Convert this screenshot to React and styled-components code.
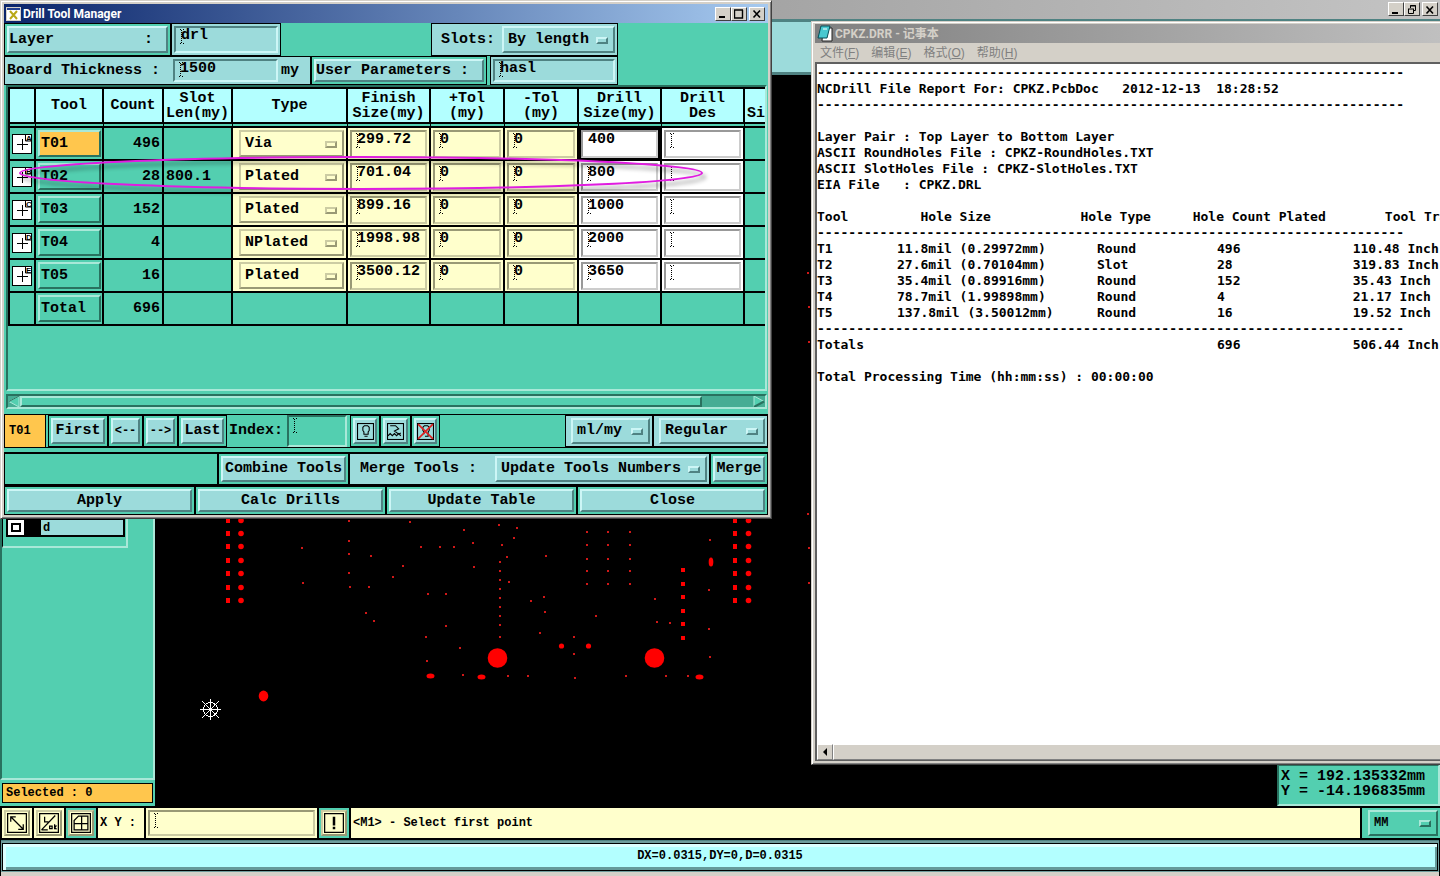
import React from 'react';
import styled, { createGlobalStyle, css } from 'styled-components';

const GlobalStyle = createGlobalStyle`
  *, *::before, *::after {
    box-sizing: border-box;
  }
  body {
    margin: 0;
    background: #000;
  }
  button, input, select, textarea {
    margin: 0;
    border-radius: 0;
    font: inherit;
    color: inherit;
    outline: none;
  }
`

const tones = {
  teal: { bg: '#53cfb0', light: '#a9e8d8', dark: '#29715f' },
  cyan: { bg: '#9cdbdb', light: '#cdf6f6', dark: '#4f8282' },
  cream: { bg: '#ffffcc', light: '#cccca3', dark: '#999975' },
  white: { bg: '#ffffff', light: '#cccccc', dark: '#999999' },
  orange: { bg: '#ffc64d', light: '#a9e8d8', dark: '#29715f' },
}

const raised = css`
  border: 2px solid;
  border-color: ${p => {
    const t = tones[p.$tone || 'cyan']
    return `${t.light} ${t.dark} ${t.dark} ${t.light}`
  }};
  background-color: ${p => tones[p.$tone || 'cyan'].bg};
`

const sunken = css`
  border: 2px solid;
  border-color: ${p => {
    const t = tones[p.$tone || 'cyan']
    return `${t.dark} ${t.light} ${t.light} ${t.dark}`
  }};
  background-color: ${p => tones[p.$tone || 'cyan'].bg};
`

const Desktop = styled.div`
  position: relative;
  display: flex;
  flex-direction: column;
  min-height: 100vh;
  overflow: hidden;
  background: #000;
  color: #000;
  font: bold 15px/16px "Liberation Mono", "Courier New", monospace;
`

/* editor behind the two windows */

const EditorTitle = styled.div`
  display: flex;
  justify-content: flex-end;
  height: 19px;
  padding: 2px 2px 0 0;
  background: linear-gradient(90deg, #808080, #c4c4c4);
`

const WinButtons = styled.div`
  display: flex;
  margin-left: auto;
  > :last-child {
    margin-left: 2px;
  }
`

const WinButton = styled.button`
  width: 16px;
  height: 14px;
  padding: 0;
  border: 1px solid;
  border-color: #fff #404040 #404040 #fff;
  background: #d4d0c8;
  svg {
    display: block;
    margin: 1px auto 0;
  }
`

const EditorStrip = styled.div`
  height: 56px;
  border-top: 3px solid #4f8282;
  border-bottom: 3px solid #4f8282;
  background: #9cdbdb;
`

const EditorBody = styled.div`
  display: flex;
  flex: 1;
`

const Side = styled.aside`
  display: flex;
  flex-direction: column;
  width: 155px;
  background: #53cfb0;
`

const LayerPanel = styled.div`
  flex: 1;
  border-left: 2px solid #29715f;
  border-right: 2px solid #a9e8d8;
  border-bottom: 2px solid #a9e8d8;
`

const LayerList = styled.div`
  display: flex;
  flex-direction: column;
  justify-content: flex-end;
  width: 126px;
  height: 473px;
  padding: 0 1px 9px 3px;
  border: 1px solid #000;
  border-right: 2px solid #a9e8d8;
  border-bottom: 2px solid #a9e8d8;
`

const LayerRow = styled.label`
  display: flex;
  height: 19px;
  border: 2px solid #000;
  background: #9cdbdb;
  font-size: 12px;
  input {
    width: 16px;
    height: 15px;
    appearance: none;
    border: 3px solid #fff;
    outline: 2px solid #000;
    outline-offset: -5px;
    background: #fff;
  }
  span {
    flex: 1;
    padding-left: 2px;
    border-left: 17px solid #000;
  }
`

const Selected = styled.div`
  height: 20px;
  margin: 3px 2px;
  padding: 1px 3px;
  border: 1px solid #000;
  background: #ffc64d;
  font-size: 12px;
`

const Canvas = styled.main`
  position: relative;
  display: flex;
  flex: 1;
  align-items: flex-end;
  justify-content: flex-end;
`

const Board = styled.svg`
  position: absolute;
  top: 0;
  left: 0;
  width: 100%;
  height: 100%;
`

const Position = styled.div`
  position: relative;
  width: 163px;
  padding: 3px 2px 5px;
  border: 2px solid;
  border-color: #29715f #a9e8d8 #a9e8d8 #29715f;
  background: #53cfb0;
  line-height: 15px;
`

const StatusBar = styled.div`
  display: flex;
  gap: 2px;
  height: 34px;
  padding: 1px 0 2px 2px;
  border-top: 1px solid #000;
  background: #000;
  font-size: 12px;
`

const StatusCell = styled.div`
  display: flex;
  align-items: center;
  flex: ${p => (p.$grow ? 1 : 'none')};
  width: ${p => p.$w || 'auto'};
  padding: 2px;
  background: ${p => tones[p.$tone || 'cream'].bg};
`

const InfoBar = styled.div`
  margin: 0 1px;
  padding: 2px 1px 1px;
  border-top: 1px solid #4f8282;
  border-bottom: 4px solid #d4d0c8;
  background: #6f9c9c;
  div {
    height: 28px;
    padding: 4px;
    border: 1px solid #000;
    box-shadow: inset 3px 3px #dcffff, inset -2px -3px #659a9a;
    background: #b3ffff;
    font-size: 12px;
    text-align: center;
  }
`

/* windows */

const frame = css`
  border: 1px solid;
  border-color: #d4d0c8 #404040 #404040 #d4d0c8;
  box-shadow: inset 1px 1px #fff, inset -1px -1px #808080;
  background: #d4d0c8;
`

const Dialog = styled.section`
  position: absolute;
  top: 0;
  left: 0;
  width: 772px;
  padding: 3px;
  ${frame}
`

const TitleBar = styled.header`
  display: flex;
  align-items: center;
  gap: 2px;
  height: 19px;
  padding: 0 3px 0 2px;
  background: ${p => (p.$active ? 'linear-gradient(90deg, #0a246a, #a6caf0)' : 'linear-gradient(90deg, #808080, #c0c0c0)')};
  color: ${p => (p.$active ? '#fff' : '#d4d0c8')};
  font: bold 12px/18px Roboto, "Noto Sans CJK SC", sans-serif;
`

const DialogBody = styled.div`
  background: #53cfb0;
`

const Row = styled.div`
  display: flex;
  height: ${p => p.$h}px;
  margin-top: ${p => p.$top || 0}px;
  border-top: ${p => (p.$ruled ? '1px solid #000' : 'none')};
  border-bottom: ${p => (p.$ruled ? '1px solid #000' : 'none')};
`

const Cell = styled.div`
  display: flex;
  align-items: center;
  flex: ${p => (p.$grow ? 1 : 'none')};
  width: ${p => p.$w || 'auto'};
  padding: 2px;
  border: 1px solid #000;
  background: ${p => tones[p.$tone || 'teal'].bg};
`

const Gap = styled.div`
  width: ${p => p.$w || 'auto'};
`

const Caption = styled.label`
  align-self: center;
  width: ${p => p.$w || 'auto'};
  padding-left: ${p => p.$pad || 0}px;
  white-space: pre;
`

const Button = styled.button`
  ${raised}
  display: flex;
  align-items: center;
  justify-content: ${p => p.$align || 'center'};
  flex: 1;
  align-self: stretch;
  min-width: 0;
  padding: 0;
  font-size: ${p => (p.$small ? '12px' : '15px')};
  white-space: pre;
  svg {
    flex: none;
  }
`

const Field = styled.input`
  ${sunken}
  width: ${p => p.$w || '100%'};
  min-width: 0;
  align-self: stretch;
  padding: 0 0 ${p => p.$drop || 8}px 5px;
  ${p => !p.$plain && css`
    background-image:
      repeating-linear-gradient(#000 0 1px, transparent 1px 2px),
      linear-gradient(90deg, #000 0 1px, transparent 1px 3px, #000 3px 4px),
      linear-gradient(90deg, #000 0 1px, transparent 1px 3px, #000 3px 4px);
    background-size: 1px 13px, 4px 1px, 4px 1px;
    background-position: 5px 2px, 4px 1px, 4px 15px;
    background-repeat: no-repeat;
  `}
`

const Picker = styled.span`
  position: relative;
  display: flex;
  flex: 1;
  align-self: stretch;
  margin-left: ${p => p.$indent || 0}px;
  select {
    ${raised}
    flex: 1;
    min-width: 0;
    appearance: none;
    padding: 0 0 0 4px;
  }
  &::after {
    content: '';
    position: absolute;
    top: calc(50% - 3px);
    right: 7px;
    width: 12px;
    height: 7px;
    ${raised}
    pointer-events: none;
  }
`

// the select is a plain child, so it gets the tone as well
const ToneSelect = styled.select`
  && {
    ${raised}
  }
`

const Select = ({ label, options, tone, indent }) => (
  <Picker $tone={tone} $indent={indent}>
    <ToneSelect $tone={tone} aria-label={label}>
      {options.map(o => <option key={o}>{o}</option>)}
    </ToneSelect>
  </Picker>
)

const TableFrame = styled.div`
  height: 306px;
  margin: 0 1px 0 2px;
  overflow: hidden;
  border: 2px solid;
  border-color: #29715f #a9e8d8 #a9e8d8 #29715f;
`

const Table = styled.table`
  width: 820px;
  table-layout: fixed;
  border-collapse: separate;
  border-spacing: 0;
  border-left: 2px solid #000;
  th {
    height: 41px;
    padding: 0;
    border-top: 2px solid #000;
    border-right: 2px solid #000;
    border-bottom: 6px double #000;
    background: #b3ffff;
    background-clip: padding-box;
    line-height: 15px;
  }
  th:last-child {
    padding-left: 2px;
    text-align: left;
  }
  td {
    height: 33px;
    padding: 0 2px;
    border-right: 2px solid #000;
    border-bottom: 2px solid #000;
  }
`

const Td = styled.td`
  background: ${p => tones[p.$tone || 'teal'].bg};
  text-align: ${p => p.$align || 'left'};
  box-shadow: ${p => (p.$focus ? 'inset 0 0 0 2px #000' : 'none')};
  > ${Button} {
    width: 63px;
    height: 27px;
    padding-left: 1px;
  }
  > ${Field} {
    display: block;
    height: 28px;
  }
  > ${Picker} {
    height: 27px;
  }
  > svg {
    display: block;
  }
`

const Scroller = styled.div`
  display: flex;
  height: 15px;
  margin: 3px 1px 0 2px;
  border: 2px solid;
  border-color: #29715f #a9e8d8 #a9e8d8 #29715f;
  background: #46ad94;
  svg {
    flex: none;
  }
  div {
    width: 682px;
    border: 2px solid;
    border-color: #a9e8d8 #29715f #29715f #a9e8d8;
    background: #53cfb0;
  }
  svg:last-child {
    margin-left: auto;
  }
`

const Tag = styled.div`
  width: 42px;
  margin-right: 2px;
  padding: 8px 4px;
  border-left: 1px solid #000;
  border-right: 1px solid #000;
  background: #ffc64d;
  font-size: 12px;
`

const Mark = styled.svg`
  position: absolute;
  top: 151px;
  left: 13px;
  pointer-events: none;
  filter: drop-shadow(3px 4px 2px rgba(0, 0, 0, 0.45));
`

const Notepad = styled.section`
  position: absolute;
  top: 21px;
  left: 811px;
  right: -8px;
  display: flex;
  flex-direction: column;
  height: 744px;
  padding: 2px 3px 3px;
  ${frame}
`

const Menu = styled.nav`
  display: flex;
  gap: 12px;
  height: 19px;
  padding-left: 5px;
  button {
    padding: 0;
    border: 0;
    background: none;
    color: #808080;
    font: 12px/18px "Liberation Sans", "Noto Sans CJK SC", sans-serif;
  }
`

const Report = styled.textarea`
  flex: 1;
  padding: 1px 0;
  resize: none;
  overflow: hidden;
  border: 2px solid;
  border-color: #606060 #d4d0c8 #d4d0c8 #606060;
  border-bottom: 0;
  background: #fff;
  font: bold 13px/16px "DejaVu Sans Mono", monospace;
  tab-size: 40px;
  white-space: pre;
`

const NoteScroll = styled.div`
  display: flex;
  height: 17px;
  border-left: 2px solid #606060;
  border-bottom: 1px solid #606060;
  button, div {
    border: 1px solid;
    border-color: #fff #808080 #808080 #fff;
    background: #d4d0c8;
  }
  button {
    width: 16px;
    padding: 0 4px;
  }
  svg {
    display: block;
  }
  div {
    flex: 1;
  }
`

const headings = [
  '', 'Tool', 'Count', 'Slot\nLen(my)', 'Type', 'Finish\nSize(my)',
  '+Tol\n(my)', '-Tol\n(my)', 'Drill\nSize(my)', 'Drill\nDes', '\u00a0\nSi',
]
const widths = [26, 68, 60, 69, 115, 83, 74, 74, 83, 83, 83]

const tools = [
  { id: 'T01', key: 'A', count: 496, slot: '', type: 'Via', finish: '299.72', drill: '400' },
  { id: 'T02', key: 'B', count: 28, slot: '800.1', type: 'Plated', finish: '701.04', drill: '800' },
  { id: 'T03', key: 'C', count: 152, slot: '', type: 'Plated', finish: '899.16', drill: '1000' },
  { id: 'T04', key: 'D', count: 4, slot: '', type: 'NPlated', finish: '1998.98', drill: '2000' },
  { id: 'T05', key: 'E', count: 16, slot: '', type: 'Plated', finish: '3500.12', drill: '3650' },
]
const types = ['Via', 'Plated', 'NPlated']

const rule = '-'.repeat(75)
const report = [
  rule,
  'NCDrill File Report For: CPKZ.PcbDoc   2012-12-13  18:28:52',
  rule,
  '',
  'Layer Pair : Top Layer to Bottom Layer',
  'ASCII RoundHoles File : CPKZ-RoundHoles.TXT',
  'ASCII SlotHoles File : CPKZ-SlotHoles.TXT',
  'EIA File   : CPKZ.DRL',
  '',
  'Tool\t\t   Hole Size\t\t   Hole Type\t  Hole Count Plated\t\t Tool Travel',
  rule,
  'T1\t\t11.8mil (0.29972mm)\t\tRound\t\t496\t\t\t  110.48 Inch',
  'T2\t\t27.6mil (0.70104mm)\t\tSlot\t\t\t28\t\t\t  319.83 Inch',
  'T3\t\t35.4mil (0.89916mm)\t\tRound\t\t152\t\t\t  35.43 Inch',
  'T4\t\t78.7mil (1.99898mm)\t\tRound\t\t4\t\t\t  21.17 Inch',
  'T5\t\t137.8mil (3.50012mm)\tRound\t\t16\t\t\t  19.52 Inch',
  rule,
  'Totals\t\t\t\t\t\t\t\t\t696\t\t\t  506.44 Inch',
  '',
  'Total Processing Time (hh:mm:ss) : 00:00:00',
].join('\n')

const vias = [
  [302, 548], [303, 583], [349, 521], [349, 541], [349, 554], [349, 573], [350, 587], [369, 587],
  [371, 556], [393, 577], [403, 566], [410, 522], [421, 547], [440, 547], [454, 547], [464, 530],
  [473, 543], [474, 567], [428, 594], [446, 594], [366, 613], [374, 621], [446, 626], [426, 637],
  [460, 648], [427, 661], [463, 675], [499, 525], [502, 545], [517, 528], [514, 538], [507, 557],
  [500, 562], [500, 571], [500, 580], [500, 589], [500, 598], [500, 607], [500, 616], [500, 625],
  [500, 637], [509, 582], [531, 601], [544, 597], [545, 612], [540, 633], [546, 556], [574, 637],
  [574, 654], [575, 678], [596, 616], [655, 599], [657, 622], [670, 623], [710, 540], [709, 590],
  [709, 629], [710, 657], [508, 676], [528, 676], [626, 676], [666, 676], [688, 676],
  [808, 514], [809, 548], [809, 583], [808, 273], [809, 307], [809, 342],
]
const gridVias = [532, 545, 559, 571, 584].flatMap(y => [587, 608, 630].map(x => [x, y]))
const pads = [520, 533, 546, 560, 573, 587, 600]
const strip = [570, 584, 597, 611, 624, 638]

const Drills = () => (
  <Board aria-hidden="true">
    <g transform="translate(-155 -75)" fill="#f00">
      {[...vias, ...gridVias].map(([x, y]) => (
        <rect key={`${x}-${y}`} x={x - 1} y={y - 1} width="2" height="2" fill="#d01818" />
      ))}
      {pads.map(y => (
        <g key={y}>
          <rect x="226" y={y - 2} width="4" height="5" />
          <circle cx="241" cy={y + 0.5} r="2.8" />
          <rect x="733" y={y - 2} width="4" height="5" />
          <circle cx="748.5" cy={y + 0.5} r="2.8" />
        </g>
      ))}
      {strip.map(y => <rect key={y} x="681" y={y - 2} width="4" height="4" />)}
      <ellipse cx="711" cy="562" rx="2.3" ry="4.5" />
      <circle cx="561.5" cy="646" r="2.6" />
      <circle cx="588.5" cy="646" r="2.6" />
      <circle cx="497.5" cy="658" r="9.8" />
      <circle cx="654.5" cy="658" r="9.8" />
      <ellipse cx="430.5" cy="676" rx="4" ry="2.5" />
      <ellipse cx="481.5" cy="677" rx="4" ry="2.5" />
      <ellipse cx="699.5" cy="677" rx="4" ry="2.5" />
      <ellipse cx="263.5" cy="696" rx="4.8" ry="5.4" />
      <g stroke="#fff" fill="none" shapeRendering="crispEdges">
        <path d="M200 709.5h21M210.5 699v21M202 701l17 17M219 701l-17 17" />
        <circle cx="210.5" cy="709.5" r="7" />
      </g>
    </g>
  </Board>
)

const MinIcon = () => <svg width="10" height="10"><path d="M1 8h6" stroke="#000" strokeWidth="2" /></svg>
const MaxIcon = () => <svg width="10" height="10"><path d="M.5 1v8h8V1M0 1h9" stroke="#000" fill="none" strokeWidth="1.4" /></svg>
const RestoreIcon = () => (
  <svg width="10" height="10" fill="none" stroke="#000">
    <path d="M3.5 3V.5h5v5H7M3 1h6M1 4h6M1.5 4v4.5h5V4" />
  </svg>
)
const CloseIcon = () => <svg width="10" height="10"><path d="M1.5 1.5L8 8.5M8 1.5L1.5 8.5" stroke="#000" strokeWidth="1.6" /></svg>

const ToolSymbol = ({ letter }) => (
  <svg width="20" height="20">
    <rect x=".5" y=".5" width="19" height="19" fill="#fff" stroke="#000" />
    <path d="M5 10.5h11M10.5 5v11" stroke="#000" />
    <path d="M13.5 0v7H20" fill="none" stroke="#000" />
    <text x="14" y="7" fontSize="8" fontFamily="Liberation Sans">{letter}</text>
  </svg>
)

const IconBox = ({ size = 17, children }) => (
  <svg width={size} height={size} viewBox="2 2 16 16" fill="none" stroke="#000">
    <rect x="2.5" y="2.5" width="15" height="15" />
    {children}
  </svg>
)

const DrillDialog = () => (
  <Dialog>
    <TitleBar $active>
      <svg width="15" height="14">
        <rect x=".5" y=".5" width="14" height="13" fill="#fff" stroke="#d4d0c8" />
        <path d="M1 2h13" stroke="#24408e" strokeWidth="2" />
        <path d="M4 4l7 8M11 4l-7 8" stroke="#b8a818" strokeWidth="2" />
      </svg>
      Drill Tool Manager
      <WinButtons>
        <WinButton aria-label="Minimize"><MinIcon /></WinButton>
        <WinButton aria-label="Maximize"><MaxIcon /></WinButton>
        <WinButton aria-label="Close"><CloseIcon /></WinButton>
      </WinButtons>
    </TitleBar>
    <DialogBody>
      <Row $h={33}>
        <Cell $w="167px"><Button $align="flex-start">{'Layer          :'}</Button></Cell>
        <Cell $w="110px" $tone="cyan"><Field aria-label="Layer" defaultValue="drl" /></Cell>
        <Gap $w="150px" />
        <Cell $w="187px" $tone="cyan">
          <Caption $w="68px" $pad={7}>Slots:</Caption>
          <Select label="Slots" options={['By length', 'By count']} />
        </Cell>
      </Row>
      <Row $h={29}>
        <Cell $w="307px" $tone="cyan">
          <Caption htmlFor="thickness" $w="166px">Board Thickness :</Caption>
          <Field id="thickness" $w="105px" defaultValue="1500" $drop={4} />
          <Caption htmlFor="thickness" $pad={3}>my</Caption>
        </Cell>
        <Cell $w="176px"><Button $align="flex-start">User Parameters :</Button></Cell>
        <Gap $w="3px" />
        <Cell $w="128px" $tone="cyan"><Field aria-label="User Parameters" defaultValue="hasl" $drop={4} /></Cell>
      </Row>
      <TableFrame>
        <Table>
          <colgroup>
            {widths.map((w, i) => <col key={i} style={{ width: w }} />)}
          </colgroup>
          <thead>
            <tr>
              {headings.map((h, i) => (
                <th key={i}>{h.split('\n').map(line => <div key={line}>{line}</div>)}</th>
              ))}
            </tr>
          </thead>
          <tbody>
            {tools.map((t, i) => (
              <tr key={t.id}>
                <Td><ToolSymbol letter={t.key} /></Td>
                <Td><Button $tone={i === 0 ? 'orange' : 'teal'} $align="flex-start">{t.id}</Button></Td>
                <Td $align="right">{t.count}</Td>
                <Td>{t.slot}</Td>
                <Td $tone="cream"><Select label={`${t.id} type`} tone="cream" indent={4} options={[t.type, ...types.filter(x => x !== t.type)]} /></Td>
                <Td $tone="cream"><Field $tone="cream" aria-label={`${t.id} finish size`} defaultValue={t.finish} /></Td>
                <Td $tone="cream"><Field $tone="cream" aria-label={`${t.id} plus tolerance`} defaultValue="0" /></Td>
                <Td $tone="cream"><Field $tone="cream" aria-label={`${t.id} minus tolerance`} defaultValue="0" /></Td>
                <Td $tone="white" $focus={i === 0}><Field $tone="white" $plain={i === 0} aria-label={`${t.id} drill size`} defaultValue={t.drill} /></Td>
                <Td $tone="white"><Field $tone="white" aria-label={`${t.id} designation`} defaultValue="" /></Td>
                <Td />
              </tr>
            ))}
            <tr>
              <Td />
              <Td><Button $tone="teal" $align="flex-start">Total</Button></Td>
              <Td $align="right">696</Td>
              {widths.slice(3).map((w, i) => <Td key={i} />)}
            </tr>
          </tbody>
        </Table>
      </TableFrame>
      <Scroller>
        <svg width="12" height="11"><path d="M11 0v11L1 5.5z" fill="#53cfb0" stroke="#a9e8d8" /><path d="M11 0L1 5.5" stroke="#29715f" /></svg>
        <div />
        <svg width="12" height="11"><path d="M1 0v11l10-5.5z" fill="#53cfb0" stroke="#a9e8d8" /><path d="M1 11l10-5.5" stroke="#29715f" strokeWidth="2" /></svg>
      </Scroller>
      <Row $h={34} $top={5} $ruled>
        <Tag>T01</Tag>
        <Cell $w="60px"><Button>First</Button></Cell>
        <Cell $w="35px"><Button $small>{'<--'}</Button></Cell>
        <Cell $w="35px"><Button $small>{'-->'}</Button></Cell>
        <Cell $w="49px"><Button>Last</Button></Cell>
        <Gap $w="2px" />
        <Caption htmlFor="index" $w="58px">Index:</Caption>
        <Field id="index" $tone="teal" $w="60px" defaultValue="" />
        <Gap $w="3px" />
        <Cell $w="30px">
          <Button aria-label="Highlight">
            <IconBox><path d="M8.5 12.5v-2L7.5 9V6L9 4.5h3L13.5 6v3l-1 1.5v2zM9 14.5h3" /></IconBox>
          </Button>
        </Cell>
        <Cell $w="31px">
          <Button aria-label="Redraw">
            <IconBox><path d="M5 4.5h5l3 3-4 2 4 3 2-1M3 14l2-2 2 2 2-2 2 2 2-2 2 2" /></IconBox>
          </Button>
        </Cell>
        <Cell $w="29px">
          <Button aria-label="Clear highlight">
            <IconBox>
              <path d="M8.5 12.5v-2L7.5 9V6L9 4.5h3L13.5 6v3l-1 1.5v4h-3" />
              <path d="M3 3l14 14M17 3L3 17" stroke="#d22" strokeWidth="1.5" />
            </IconBox>
          </Button>
        </Cell>
        <Gap $w="125px" />
        <Cell $w="88px" $tone="cyan"><Select label="Units" indent={3} options={['ml/my', 'inch/mm']} /></Cell>
        <Cell $grow $tone="cyan"><Select label="Mode" indent={3} options={['Regular', 'Advanced']} /></Cell>
      </Row>
      <Row $h={34} $top={4} $ruled>
        <Cell $w="214px" />
        <Cell $w="131px"><Button>Combine Tools</Button></Cell>
        <Cell $w="361px" $tone="cyan">
          <Caption $w="143px" $pad={8}>Merge Tools :</Caption>
          <Select label="Merge Tools" options={['Update Tools Numbers', 'Keep Tools Numbers']} />
        </Cell>
        <Cell $grow><Button>Merge</Button></Cell>
      </Row>
      <Row $h={29}>
        {['Apply', 'Calc Drills', 'Update Table', 'Close'].map(name => (
          <Cell key={name} $grow><Button>{name}</Button></Cell>
        ))}
      </Row>
    </DialogBody>
    <Mark width="696" height="44" fill="none" stroke="#e01ce0" strokeWidth="2">
      <ellipse cx="347" cy="21" rx="341" ry="16" />
    </Mark>
  </Dialog>
)

const menus = [['文件', 'F'], ['编辑', 'E'], ['格式', 'O'], ['帮助', 'H']]

const ReportWindow = () => (
  <Notepad>
    <TitleBar>
      <svg width="16" height="17">
        <path d="M6 3h9v13H5z" fill="#fff" stroke="#222" />
        <path d="M4 1h9l-3 12H1z" fill="#48c8d0" stroke="#064f58" />
        <path d="M6 4h4" stroke="#fff" />
      </svg>
      CPKZ.DRR - 记事本
    </TitleBar>
    <Menu>
      {menus.map(([name, key]) => <button key={key}>{name}(<u>{key}</u>)</button>)}
    </Menu>
    <Report aria-label="CPKZ.DRR" wrap="off" spellCheck="false" defaultValue={report} />
    <NoteScroll>
      <button aria-label="Scroll left"><svg width="6" height="8"><path d="M5 0v8L1 4z" /></svg></button>
      <div />
    </NoteScroll>
  </Notepad>
)

const App = () => {
  return (
    <>
      <GlobalStyle />
      <Desktop>
        <EditorTitle>
          <WinButtons>
            <WinButton aria-label="Minimize"><MinIcon /></WinButton>
            <WinButton aria-label="Restore"><RestoreIcon /></WinButton>
            <WinButton aria-label="Close"><CloseIcon /></WinButton>
          </WinButtons>
        </EditorTitle>
        <EditorStrip />
        <EditorBody>
          <Side>
            <LayerPanel>
              <LayerList>
                <LayerRow>
                  <input type="checkbox" />
                  <span>d</span>
                </LayerRow>
              </LayerList>
            </LayerPanel>
            <Selected>Selected : 0</Selected>
          </Side>
          <Canvas>
            <Drills />
            <Position>
              <div>X = 192.135332mm</div>
              <div>Y = -14.196835mm</div>
            </Position>
          </Canvas>
        </EditorBody>
        <StatusBar>
          <StatusCell $w="30px">
            <Button $tone="cream" aria-label="Stretch"><IconBox size={20}><path d="M5 5l10 10M5 9V5h4M15 11v4h-4" /></IconBox></Button>
          </StatusCell>
          <StatusCell $w="30px">
            <Button $tone="cream" aria-label="Angle"><IconBox size={20}><path d="M4 15.5L15 4M4 15.5h5M6.5 5v4h3M10.5 12.5h2v2h-2zM14.5 11v4M16 12l-1.5 1.500L16 15" /></IconBox></Button>
          </StatusCell>
          <StatusCell $w="30px" $tone="teal">
            <Button $tone="cream" aria-label="Grid"><IconBox size={20}><path d="M8 4.5h7.5v11h-11V8zM10.5 4.5v11M4.5 10.5h11" /></IconBox></Button>
          </StatusCell>
          <StatusCell $w="46px"><label htmlFor="xy">X Y :</label></StatusCell>
          <StatusCell $w="171px"><Field id="xy" $tone="cream" defaultValue="" /></StatusCell>
          <StatusCell $w="30px" $tone="teal">
            <Button $tone="cream" aria-label="Message"><IconBox size={20}><path d="M10 5v7M10 13v2" strokeWidth="2" /></IconBox></Button>
          </StatusCell>
          <StatusCell $grow>{'<M1> - Select first point'}</StatusCell>
          <StatusCell $w="78px" $tone="teal"><Select label="Units" tone="teal" indent={4} options={['MM', 'INCH']} /></StatusCell>
        </StatusBar>
        <InfoBar><div>DX=0.0315,DY=0,D=0.0315</div></InfoBar>
        <DrillDialog />
        <ReportWindow />
      </Desktop>
    </>
  )
}

export default App
